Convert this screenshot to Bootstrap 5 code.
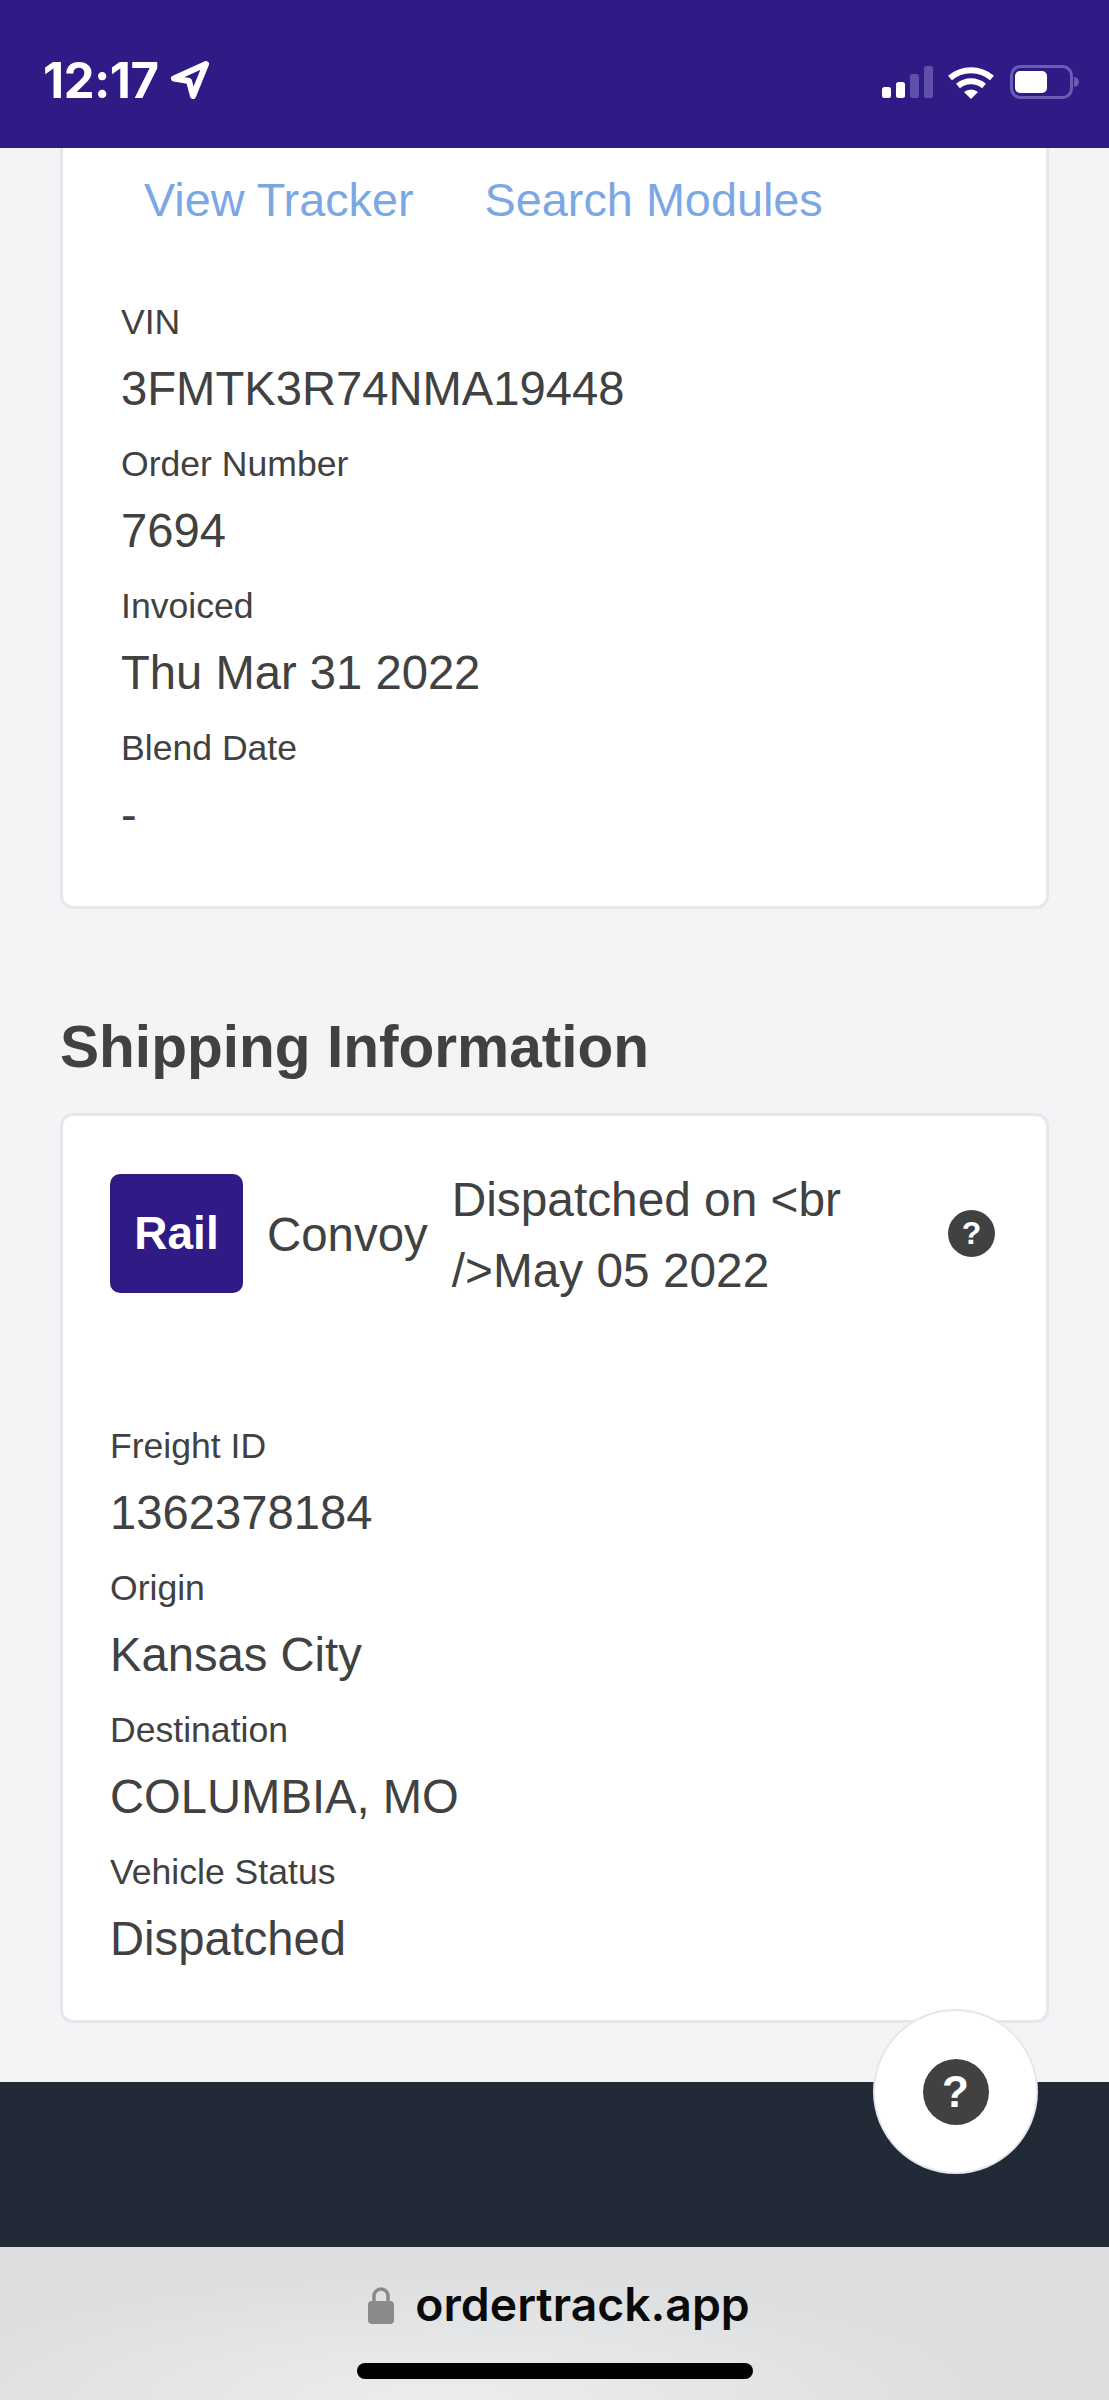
<!DOCTYPE html>
<html lang="en">
<head>
  <meta charset="UTF-8">
  <title>Order Tracker - Shipping Information</title>
  <meta name="viewport" content="width=device-width, initial-scale=1">
  <link href="https://cdn.jsdelivr.net/npm/bootstrap@5.3.0/dist/css/bootstrap.min.css" rel="stylesheet">
  <style>
    body {
      height: 2400px;
      overflow: hidden;
      background: #f3f4f6;
      color: #414141;
      font-family: "Liberation Sans", Arial, sans-serif;
    }
    .status-bar {
      height: 148px;
      padding: 12px 30px 0 43px;
      background: #2f1a86;
      color: #fff;
    }
    .status-time {
      font-family: Inter, sans-serif;
      font-size: 49px;
      font-weight: 700;
      letter-spacing: -0.5px;
      line-height: 1;
    }
    .status-arrow {
      margin-left: 12px;
    }
    .status-icons {
      padding-top: 5px;
    }
    .page-body {
      height: 1934px;
      padding: 0 60px;
    }
    .info-card {
      border: 3px solid #e5e7eb;
      border-radius: 13px;
      background: #fff;
    }
    .info-card-top {
      height: 761px;
      padding: 0 58px;
      border-top: 0;
      border-top-left-radius: 0;
      border-top-right-radius: 0;
    }
    .tracker-links {
      gap: 71px;
      height: 104px;
      padding-left: 23px;
      font-size: 46.8px;
    }
    .tracker-links a {
      color: #7ba8e4;
      text-decoration: none;
    }
    .field-list {
      padding-top: 42px;
    }
    .field-label {
      font-size: 35.6px;
      line-height: 56px;
    }
    .field-value {
      margin-bottom: 12px;
      padding-top: 4px;
      font-size: 47.2px;
      line-height: 70px;
    }
    .section-title {
      margin: 93px 0 21px;
      color: #414141;
      font-size: 58.6px;
      font-weight: 700;
      line-height: 90px;
    }
    .info-card-ship {
      height: 910px;
      padding: 56px 47px 0 47px;
    }
    .carrier-row {
      height: 122px;
      margin-bottom: 124px;
    }
    .rail-tile {
      width: 133px;
      height: 119px;
      border-radius: 10px;
      background: #2f1a86;
      color: #fff;
      font-size: 46px;
      font-weight: 700;
    }
    .carrier-name {
      margin-left: 24px;
      padding-top: 3px;
      font-size: 47.4px;
    }
    .dispatch-text {
      width: 430px;
      margin-left: 24px;
      padding-top: 3px;
      font-size: 47.8px;
      line-height: 71px;
    }
    .help-dot {
      width: 47px;
      height: 47px;
      margin-left: auto;
      margin-right: 4px;
      background: #414141;
      color: #fff;
      font-size: 32px;
      font-weight: 700;
    }
    .site-footer {
      height: 165px;
      background: #222a37;
    }
    .help-float {
      position: absolute;
      left: 875px;
      top: 2011px;
      width: 161px;
      height: 161px;
      background: #fff;
      box-shadow: 0 0 0 2px #e5e7eb;
    }
    .help-float span {
      width: 66px;
      height: 66px;
      background: #414141;
      color: #fff;
      font-size: 44px;
      font-weight: 700;
    }
    .safari-bar {
      height: 153px;
      background: radial-gradient(ellipse at 40% 100%, #eceded 0%, #dedfe1 55%, #dcdddf 100%);
    }
    .safari-url {
      gap: 21px;
      height: 116px;
      padding-left: 9px;
      color: #0a0a0a;
      font-family: Inter, sans-serif;
      font-size: 46.300px;
      font-weight: 600;
    }
    .home-bar {
      width: 396px;
      height: 16px;
      margin: 0 auto;
      border-radius: 8px;
      background: #000;
    }
  </style>
</head>
<body>

  <!-- Phone status bar -->
  <div class="status-bar d-flex justify-content-between align-items-center">
    <div class="d-flex align-items-center">
      <span class="status-time">12:17</span>
      <svg class="status-arrow" width="40" height="40" viewBox="0 0 40 40"><path d="M36 4 4 18.500 19 21l4 15z" fill="none" stroke="#fff" stroke-width="6" stroke-linejoin="round"/></svg>
    </div>
    <div class="status-icons d-flex align-items-center">
      <svg width="197" height="36" viewBox="0 0 197 36">
        <rect x="0" y="22" width="9" height="11" rx="2.500" fill="#fff"/>
        <rect x="14" y="17" width="9" height="16" rx="2.500" fill="#fff"/>
        <rect x="28" y="9" width="9" height="24" rx="2.500" fill="#5f50aa"/>
        <rect x="42" y="1" width="9" height="32" rx="2.500" fill="#5f50aa"/>
        <path d="M68 13a32 32 0 0 1 42 0" fill="none" stroke="#fff" stroke-width="6"/>
        <path d="M76 21a20 20 0 0 1 26 0" fill="none" stroke="#fff" stroke-width="6"/>
        <path d="M82 27a11 11 0 0 1 14 0l-7 7z" fill="#fff"/>
        <rect x="129.500" y="1.500" width="60" height="31" rx="9" fill="none" stroke="#6a5cb2" stroke-width="3"/>
        <rect x="133" y="6" width="32" height="22" rx="5" fill="#fff"/>
        <path d="M192 12a5 5 0 0 1 0 10z" fill="#6a5cb2"/>
      </svg>
    </div>
  </div>

  <div class="page-body">
    <!-- Vehicle card, scrolled under the status bar -->
    <div class="info-card info-card-top">
      <div class="tracker-links d-flex align-items-center">
        <a href="#">View Tracker</a>
        <a href="#">Search Modules</a>
      </div>
      <div class="field-list">
        <div class="field-label">VIN</div>
        <div class="field-value">3FMTK3R74NMA19448</div>
        <div class="field-label">Order Number</div>
        <div class="field-value">7694</div>
        <div class="field-label">Invoiced</div>
        <div class="field-value">Thu Mar 31 2022</div>
        <div class="field-label">Blend Date</div>
        <div class="field-value">-</div>
      </div>
    </div>

    <h2 class="section-title">Shipping Information</h2>

    <!-- Shipping card -->
    <div class="info-card info-card-ship">
      <div class="carrier-row d-flex align-items-center">
        <div class="rail-tile d-flex align-items-center justify-content-center">Rail</div>
        <div class="carrier-name">Convoy</div>
        <div class="dispatch-text">Dispatched on &lt;br />May 05 2022</div>
        <div class="help-dot rounded-circle d-flex align-items-center justify-content-center">?</div>
      </div>
      <div class="field-label">Freight ID</div>
      <div class="field-value">1362378184</div>
      <div class="field-label">Origin</div>
      <div class="field-value">Kansas City</div>
      <div class="field-label">Destination</div>
      <div class="field-value">COLUMBIA, MO</div>
      <div class="field-label">Vehicle Status</div>
      <div class="field-value">Dispatched</div>
    </div>
  </div>

  <div class="site-footer"></div>

  <!-- Floating help button -->
  <div class="help-float rounded-circle d-flex align-items-center justify-content-center">
    <span class="rounded-circle d-flex align-items-center justify-content-center">?</span>
  </div>

  <!-- Safari address bar -->
  <div class="safari-bar">
    <div class="safari-url d-flex align-items-center justify-content-center">
      <svg width="26" height="38" viewBox="0 0 26 38">
        <path d="M6 17V10a7 7 0 0 1 14 0v7" fill="none" stroke="#8a8a8d" stroke-width="3.500"/>
        <rect x="0" y="15" width="26" height="23" rx="4" fill="#8a8a8d"/>
      </svg>
      <span>ordertrack.app</span>
    </div>
    <div class="home-bar"></div>
  </div>

  <script src="https://cdn.jsdelivr.net/npm/bootstrap@5.3.0/dist/js/bootstrap.bundle.min.js"></script>
</body>
</html>
